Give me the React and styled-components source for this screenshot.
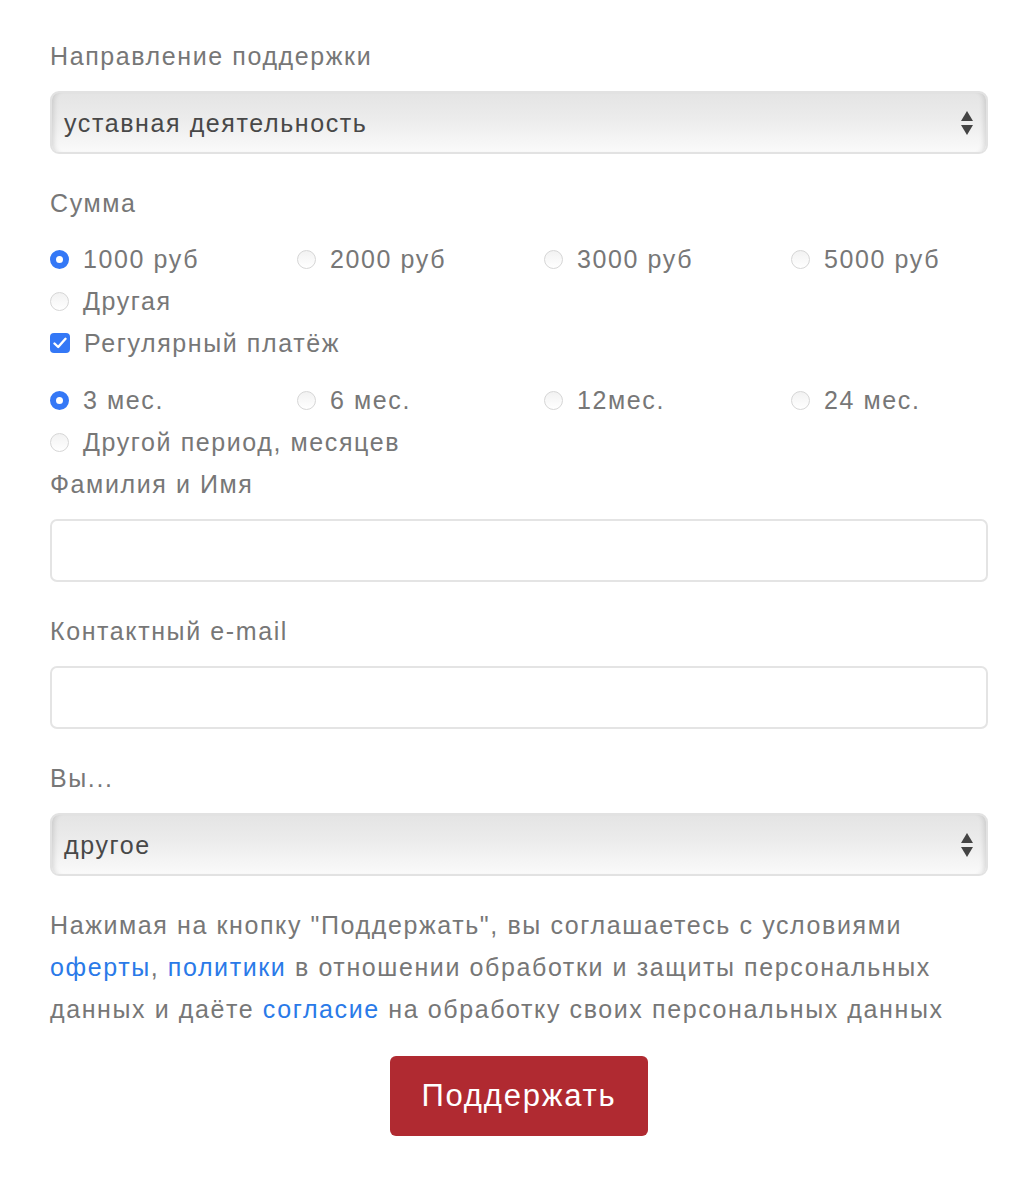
import styled, { createGlobalStyle } from "styled-components"

const Global = createGlobalStyle`
    body {
        margin: 0;
        background: #fff;
        font-family: "Liberation Sans", Arial, sans-serif;
    }
`

const Form = styled.form`
    width: 938px;
    padding: 35px 0 60px 50px;
    color: #777;
    font-size: 25px;
    letter-spacing: 1.6px;
    line-height: 42px;
`

const Label = styled.div`
    margin-bottom: 14px;
`

const Field = styled.div`
    margin-bottom: 28px;
`

const Select = styled.div`
    height: 63px;
    box-sizing: border-box;
    border: 2px solid #e2e2e2;
    border-radius: 9px;
    background: linear-gradient(#e4e4e4, #ececec 45%, #fafafa);
    box-shadow: inset 6px 0 5px -4px rgba(0,0,0,0.12), inset -6px 0 5px -4px rgba(0,0,0,0.12);
    display: flex;
    align-items: center;
    justify-content: space-between;
    padding: 0 12px 0 12px;
    color: #484848;
`

const Arrows = styled.svg`
    width: 14px;
    height: 26px;
`

const Input = styled.div`
    height: 63px;
    box-sizing: border-box;
    border: 2px solid #e4e4e4;
    border-radius: 7px;
    background: #fff;
`

const Options = styled.div`
    display: grid;
    grid-template-columns: repeat(4, 247px);
    margin-top: ${props => props.gap || 0}px;
`

const Option = styled.label`
    display: flex;
    align-items: center;
    gap: 14px;
    grid-column: ${props => props.wide ? "1 / span 4" : "auto"};
`

const Radio = styled.span`
    box-sizing: border-box;
    width: 19px;
    height: 19px;
    border-radius: 50%;
    flex-shrink: 0;
    ${props => props.checked ? `
        background: #fff;
        border: 6px solid #3478f6;
    ` : `
        background: linear-gradient(#f2f2f2, #fff);
        border: 1px solid #d6d6d6;
    `}
`

const Check = styled.span`
    width: 20px;
    height: 20px;
    border-radius: 4px;
    background: #3478f6;
    display: flex;
    align-items: center;
    justify-content: center;
    flex-shrink: 0;
`

const Agreement = styled.p`
    margin: 0 0 26px;
    line-height: 42px;
`

const Link = styled.a`
    color: #2a7ae8;
    text-decoration: none;
`

const Actions = styled.div`
    display: flex;
    justify-content: center;
`

const Button = styled.button`
    width: 258px;
    height: 80px;
    background: #b02a31;
    border: none;
    border-radius: 6px;
    color: #fff;
    font-family: inherit;
    font-size: 31px;
    letter-spacing: 1.8px;
`

const SelectBox = ({ value }) => (
    <Select>
        <span>{value}</span>
        <Arrows viewBox="0 0 14 26">
            <path d="M7 1 L13 11 L1 11 Z" fill="#444" />
            <path d="M1 15 L13 15 L7 25 Z" fill="#444" />
        </Arrows>
    </Select>
)

const sums = ["1000 руб", "2000 руб", "3000 руб", "5000 руб"]
const periods = ["3 мес.", "6 мес.", "12мес.", "24 мес."]

const App = () => {
    return (
        <>
            <Global />
            <Form>
                <Label>Направление поддержки</Label>
                <Field>
                    <SelectBox value="уставная деятельность" />
                </Field>

                <Label>Сумма</Label>
                <Options>
                    {sums.map((s, i) => (
                        <Option key={s}><Radio checked={i === 0} />{s}</Option>
                    ))}
                    <Option wide><Radio />Другая</Option>
                    <Option wide>
                        <Check>
                            <svg width="14" height="12" viewBox="0 0 14 12">
                                <path d="M1.5 6.5 L5.2 10 L12.5 1.8" fill="none" stroke="#fff" strokeWidth="2.4" strokeLinecap="round" strokeLinejoin="round" />
                            </svg>
                        </Check>
                        Регулярный платёж
                    </Option>
                </Options>
                <Options gap={15}>
                    {periods.map((p, i) => (
                        <Option key={p}><Radio checked={i === 0} />{p}</Option>
                    ))}
                    <Option wide><Radio />Другой период, месяцев</Option>
                </Options>

                <Label>Фамилия и Имя</Label>
                <Field><Input /></Field>

                <Label>Контактный e-mail</Label>
                <Field><Input /></Field>

                <Label>Вы...</Label>
                <Field>
                    <SelectBox value="другое" />
                </Field>

                <Agreement>
                    Нажимая на кнопку "Поддержать", вы соглашаетесь с условиями <Link href="#">оферты</Link>, <Link href="#">политики</Link> в отношении обработки и защиты персональных данных и даёте <Link href="#">согласие</Link> на обработку своих персональных данных
                </Agreement>

                <Actions>
                    <Button type="button">Поддержать</Button>
                </Actions>
            </Form>
        </>
    )
}

export default App
